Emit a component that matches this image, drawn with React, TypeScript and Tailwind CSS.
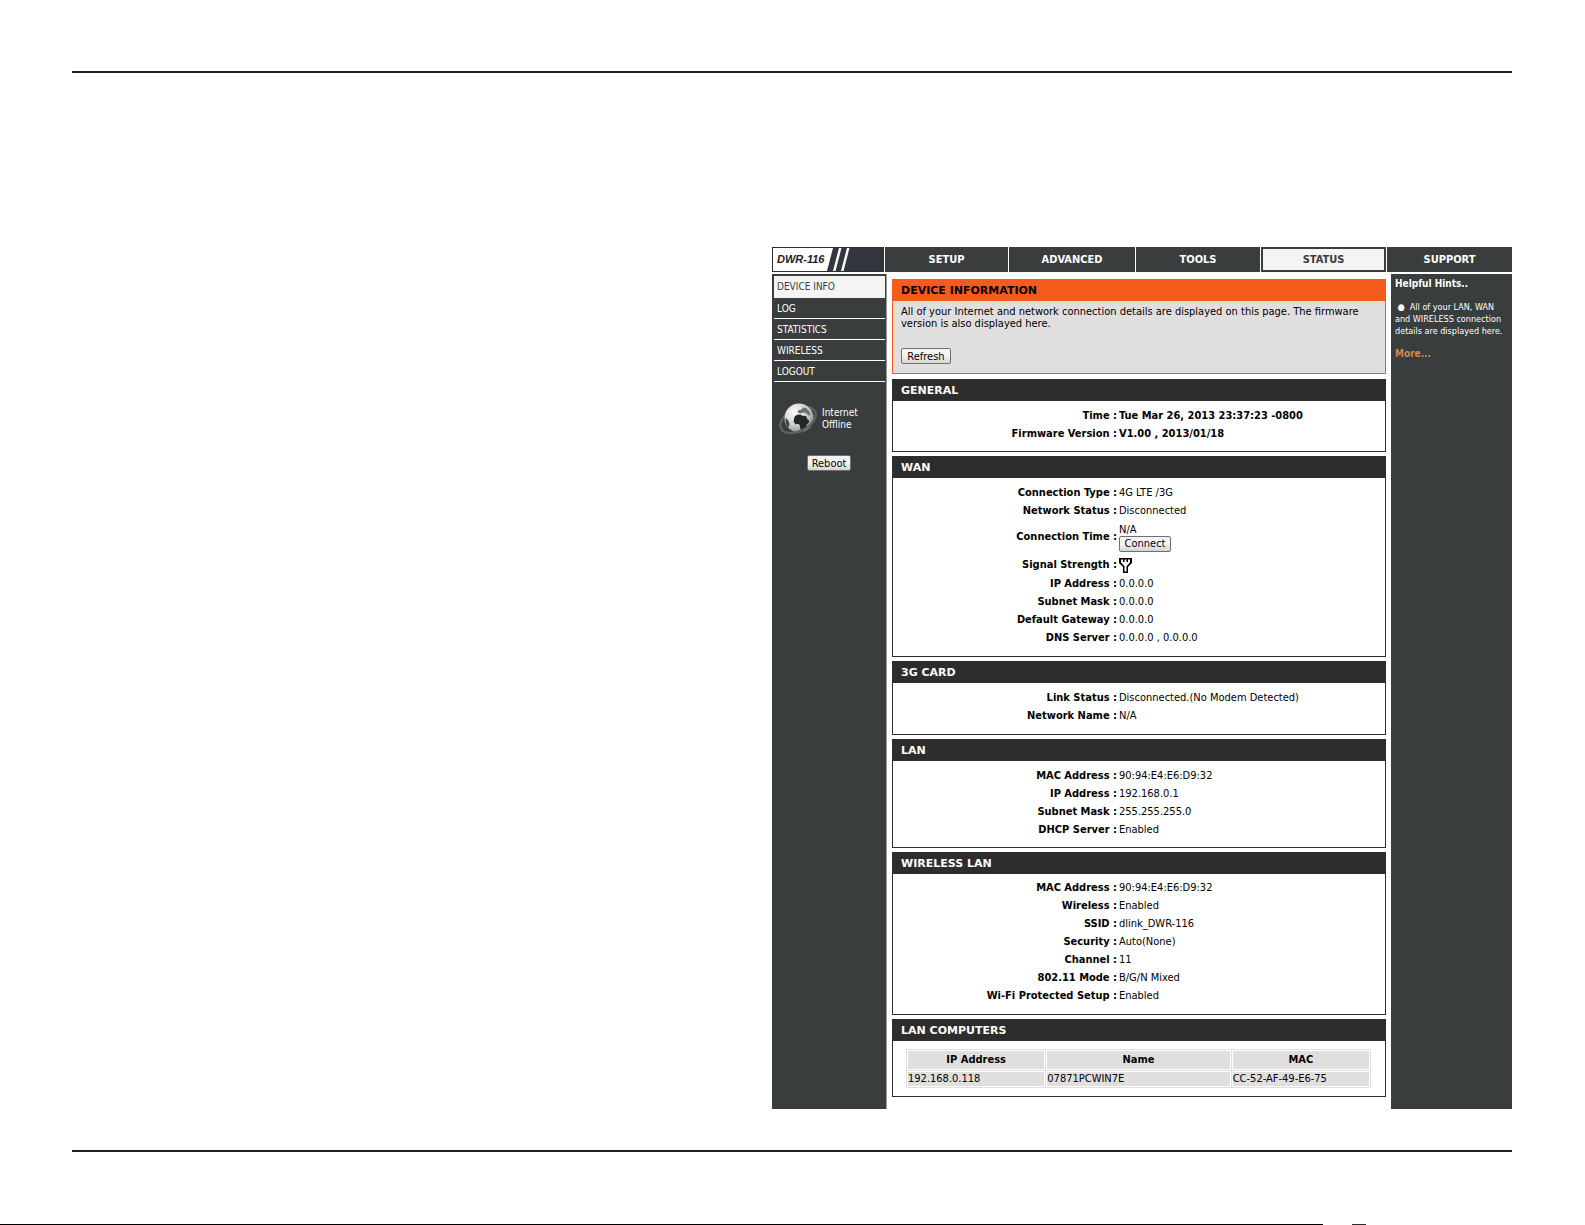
import React from "react";

type Row = { label: string; value: React.ReactNode; height?: string; strong?: boolean };

const navItems = ["SETUP", "ADVANCED", "TOOLS", "STATUS", "SUPPORT"];
const menuItems = ["DEVICE INFO", "LOG", "STATISTICS", "WIRELESS", "LOGOUT"];

const general: Row[] = [
  { label: "Time", value: "Tue Mar 26, 2013 23:37:23 -0800", strong: true },
  { label: "Firmware Version", value: "V1.00 , 2013/01/18", strong: true },
];

const wan: Row[] = [
  { label: "Connection Type", value: "4G LTE /3G" },
  { label: "Network Status", value: "Disconnected" },
  {
    label: "Connection Time",
    height: "h-[35px]",
    value: (
      <div className="flex flex-col items-start">
        <span className="leading-3">N/A</span>
        <PushButton className="w-[52px]">Connect</PushButton>
      </div>
    ),
  },
  { label: "Signal Strength", value: <AntennaIcon />, height: "h-5" },
  { label: "IP Address", value: "0.0.0.0" },
  { label: "Subnet Mask", value: "0.0.0.0" },
  { label: "Default Gateway", value: "0.0.0.0" },
  { label: "DNS Server", value: "0.0.0.0 , 0.0.0.0" },
];

const card: Row[] = [
  { label: "Link Status", value: "Disconnected.(No Modem Detected)" },
  { label: "Network Name", value: "N/A" },
];

const lan: Row[] = [
  { label: "MAC Address", value: "90:94:E4:E6:D9:32" },
  { label: "IP Address", value: "192.168.0.1" },
  { label: "Subnet Mask", value: "255.255.255.0" },
  { label: "DHCP Server", value: "Enabled" },
];

const wlan: Row[] = [
  { label: "MAC Address", value: "90:94:E4:E6:D9:32" },
  { label: "Wireless", value: "Enabled" },
  { label: "SSID", value: "dlink_DWR-116" },
  { label: "Security", value: "Auto(None)" },
  { label: "Channel", value: "11" },
  { label: "802.11 Mode", value: "B/G/N Mixed" },
  { label: "Wi-Fi Protected Setup", value: "Enabled" },
];

function PushButton({ children, className = "" }: { children: React.ReactNode; className?: string }) {
  return (
    <button
      type="button"
      className={`h-4 rounded-[2px] border border-[#707070] bg-gradient-to-b from-[#f4f4f4] from-50% to-[#d4d4d4] text-center text-[11px] leading-[13px] text-black ${className}`}
    >
      {children}
    </button>
  );
}

function AntennaIcon() {
  return (
    <svg width="13" height="15" viewBox="0 0 13 15" role="img" aria-label="No signal">
      <path d="M0 0h13v5L9 9v6H4V9L0 5z" fill="#000" />
      <path d="M2 1.500h2V4h1.500V1.500h2V4H9V1.500h2V4.500L7.500 8.300v5.200h-2V8.300L2 4.500z" fill="#fff" />
    </svg>
  );
}

function GlobeIcon() {
  return (
    <svg width="40" height="36" viewBox="0 0 40 36" aria-hidden="true">
      <defs>
        <radialGradient id="sphere" cx="0.35" cy="0.3" r="0.8">
          <stop offset="0" stopColor="#ffffff" />
          <stop offset="0.6" stopColor="#c8c8c8" />
          <stop offset="1" stopColor="#777777" />
        </radialGradient>
      </defs>
      <g transform="rotate(-27 20 19)">
        <path d="M1 19a19 11 0 0 1 38 0" fill="none" stroke="#5e6162" strokeWidth="2.500" />
      </g>
      <circle cx="21" cy="17" r="14.500" fill="url(#sphere)" />
      <path d="M17 15l3-1.500 3 .3 1 1 4 .2 1.500 3.500 2 1.500-1 2-2 2-.5 3-2 3-2 1-1.500-2-.5-3.500-1-2.500-3.500.3-1.800-2.300.3-3.500z" fill="#242727" />
      <path d="M19.500 11.500l1-2.500 3-.5 1.500-2 3 .5 3 3 1.500 4-2 .5-2.500-2.500-3-.5-2 1z" fill="#6d7071" />
      <path d="M7.500 17l2.500 2 1.500 4-1 3.500c-2-2-3.300-5.500-3-9.500z" fill="#3d4041" />
      <g transform="rotate(-27 20 19)">
        <path d="M1 19a19 11 0 0 0 38 0" fill="none" stroke="#5e6162" strokeWidth="2.500" />
      </g>
    </svg>
  );
}

function Panel({ title, children }: { title: string; children: React.ReactNode }) {
  return (
    <section className="border border-t-0 border-[#2d2d2d]">
      <h2 className="h-[22px] bg-[#2d2d2d] pl-2 font-['DejaVu_Sans',sans-serif] text-[11px] leading-6 font-bold text-white">
        {title}
      </h2>
      {children}
    </section>
  );
}

function Details({ rows, className = "pt-1.5 pb-2" }: { rows: Row[]; className?: string }) {
  return (
    <dl className={className}>
      {rows.map((row) => (
        <div key={row.label} className={`grid grid-cols-[56fr_67fr] items-center ${row.height ?? "h-[18px]"}`}>
          <dt className="text-right font-bold">{row.label} :</dt>
          <dd className={row.strong ? "pl-0.5 font-bold" : "pl-0.5"}>{row.value}</dd>
        </div>
      ))}
    </dl>
  );
}

function TopNav() {
  return (
    <nav className="grid h-[25px] grid-cols-[112fr_123fr_126fr_124fr_125fr_125fr] gap-px">
      <div className="flex border border-[#2d2d2d] bg-[#34363f]">
        <span className="flex w-[60px] items-center bg-white pl-1 font-['Liberation_Sans',sans-serif] text-[11px] font-bold text-[#222] italic [clip-path:polygon(0_0,100%_0,calc(100%-6px)_100%,0_100%)]">
          DWR-116
        </span>
        <svg width="18" height="23" viewBox="0 0 18 23" aria-hidden="true">
          <path d="M6 0h2.500L2.500 23H0zM14 0h2.500l-6 23H8z" fill="#fff" />
        </svg>
      </div>
      {navItems.map((item) =>
        item === "STATUS" ? (
          <a
            key={item}
            href="#status"
            aria-current="page"
            className="flex items-center justify-center border-2 border-[#393d3e] bg-[#f4f4f4] pt-0.5 font-bold text-[#393d3e]"
          >
            {item}
          </a>
        ) : (
          <a key={item} href="#nav" className="flex items-center justify-center bg-[#393d3e] pt-0.5 font-bold text-white">
            {item}
          </a>
        )
      )}
    </nav>
  );
}

function Sidebar() {
  return (
    <aside className="w-[115px] shrink-0 border-r border-[#9a9a9a] bg-[#393d3e] text-[10px] text-white">
      <ul className="pt-0.5 pr-px pl-0.5">
        {menuItems.map((item, i) => (
          <li key={item}>
            <a
              href="#menu"
              className={
                i === 0
                  ? "block h-[22px] bg-[#f4f4f4] pl-[3px] leading-[21px] text-[#393d3e]"
                  : "block h-[21px] border-b border-white pl-[3px] leading-[21px]"
              }
            >
              {item}
            </a>
          </li>
        ))}
      </ul>
      <div className="mt-[19px] flex items-center gap-1 pl-[6px]">
        <GlobeIcon />
        <p className="leading-3">
          Internet
          <br />
          Offline
        </p>
      </div>
      <div className="mt-[18px] pl-[35px]">
        <PushButton className="w-[44px]">Reboot</PushButton>
      </div>
    </aside>
  );
}

function Hints() {
  return (
    <aside className="w-[121px] shrink-0 bg-[#393d3e] px-1 pt-1 text-[10px] leading-3 text-white">
      <h2 className="font-bold">Helpful Hints..</h2>
      <p className="mt-[11px] text-[9px] leading-3 whitespace-nowrap">
        &nbsp;●&nbsp; All of your LAN, WAN
        <br />
        and WIRELESS connection
        <br />
        details are displayed here.
      </p>
      <a href="#more" className="mt-[11px] block font-bold text-[#d8854a]">
        More...
      </a>
    </aside>
  );
}

function LanComputers() {
  const head = "border border-white bg-[#e1dfde] font-bold outline outline-1 outline-[#e1dfde]";
  const cell = "border border-white bg-[#e1dfde] outline outline-1 outline-[#e1dfde]";
  return (
    <div className="pt-2 pr-[14px] pb-2 pl-[13px]">
      <table className="w-full table-fixed border-separate border-spacing-px text-left">
        <colgroup>
          <col className="w-[30%]" />
          <col className="w-[40%]" />
          <col className="w-[30%]" />
        </colgroup>
        <thead>
          <tr className="h-5 text-center leading-4">
            <th className={head}>IP Address</th>
            <th className={head}>Name</th>
            <th className={head}>MAC</th>
          </tr>
        </thead>
        <tbody>
          <tr className="h-4 leading-[14px]">
            <td className={cell}>192.168.0.118</td>
            <td className={cell}>07871PCWIN7E</td>
            <td className={cell}>CC-52-AF-49-E6-75</td>
          </tr>
        </tbody>
      </table>
    </div>
  );
}

export default function App() {
  return (
    <div className="flex min-h-screen flex-col bg-white font-['DejaVu_Sans_Condensed','DejaVu_Sans',sans-serif] text-[11px] text-black">
      <div className="mt-[71px] mr-[73px] ml-[72px] border-t-2 border-[#231f20] pt-[174px]">
        <div className="grid grid-cols-[35fr_37fr]">
          <main className="col-start-2">
            <TopNav />
            <div className="mt-0.5 flex">
              <Sidebar />
              <div className="flex min-w-0 flex-1 flex-col gap-1 px-[5px] pt-[5px] pb-3">
                <section className="mb-px border border-[#f55c1b] bg-[#e1dfde]">
                  <h1 className="h-[21px] bg-[#f55c1b] pl-2 font-['DejaVu_Sans',sans-serif] text-[11px] leading-[22px] font-bold">
                    DEVICE INFORMATION
                  </h1>
                  <div className="px-2 pt-[5px] pb-[9px]">
                    <p className="leading-3">
                      All of your Internet and network connection details are displayed on this page. The firmware version
                      is also displayed here.
                    </p>
                    <div className="mt-[18px] flex">
                      <PushButton className="w-[50px]">Refresh</PushButton>
                    </div>
                  </div>
                </section>
                <Panel title="GENERAL">
                  <Details rows={general} />
                </Panel>
                <Panel title="WAN">
                  <Details rows={wan} className="pt-1.5 pb-[9px]" />
                </Panel>
                <Panel title="3G CARD">
                  <Details rows={card} className="pt-1.5 pb-[9px]" />
                </Panel>
                <Panel title="LAN">
                  <Details rows={lan} />
                </Panel>
                <Panel title="WIRELESS LAN">
                  <Details rows={wlan} className="pt-[5px] pb-[9px]" />
                </Panel>
                <Panel title="LAN COMPUTERS">
                  <LanComputers />
                </Panel>
              </div>
              <Hints />
            </div>
          </main>
        </div>
      </div>
      <div className="mt-[41px] mr-[73px] ml-[72px] h-0.5 bg-[#231f20]" />
      <footer className="mt-auto grid h-px grid-cols-[1323fr_29fr_14fr_219fr]">
        <div className="bg-black" />
        <div />
        <div className="bg-[#2d2d2d]" />
      </footer>
    </div>
  );
}
